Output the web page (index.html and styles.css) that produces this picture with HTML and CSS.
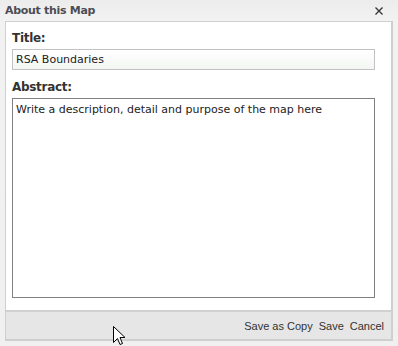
FILE: index.html
```html
<!DOCTYPE html>
<html lang="en">
<head>
    <meta charset="UTF-8">
    <title>About this Map</title>
    <link rel="stylesheet" href="styles.css">
</head>
<body>
    <!-- Dialog window -->
    <div class="dialog">
        <div class="dialog-header">
            <span class="dialog-title">About this Map</span>
            <svg class="dialog-close" width="8" height="8" viewBox="0 0 8 8">
                <path d="M0.5 0.5 L7.5 7.5 M7.5 0.5 L0.5 7.5" stroke="#333" stroke-width="1.3"/>
            </svg>
        </div>

        <div class="dialog-frame">
            <div class="dialog-body">
                <label class="field-label" for="map-title">Title:</label>
                <input type="text" id="map-title" class="field-input" value="RSA Boundaries">

                <label class="field-label" for="map-abstract">Abstract:</label>
                <textarea id="map-abstract" class="field-area">Write a description, detail and purpose of the map here</textarea>
            </div>

            <div class="dialog-footer">
                <a class="footer-link">Save as Copy</a>
                <a class="footer-link">Save</a>
                <a class="footer-link">Cancel</a>
            </div>
        </div>
    </div>

    <!-- mouse pointer -->
    <svg class="cursor" width="13" height="20" viewBox="0 0 13 20">
        <path d="M0.5 0.5 L0.5 16.5 L4.5 12.5 L7 18.5 L9.5 17.5 L7 11.5 L12 11.5 Z" fill="#fff" stroke="#000" stroke-width="1"/>
    </svg>
</body>
</html>
```

FILE: styles.css
```css
body {
    margin: 0;
    font-family: "DejaVu Sans", Verdana, sans-serif;
    background-color: #f0f0f0;
}

.dialog {
    position: relative;
    width: 398px;
    height: 346px;
    box-sizing: border-box;
    background: linear-gradient(to bottom, #ececec 0, #f2f2f2 20px, #f0f0f0 100%);
    padding: 0 5px 0 5px;
}

/* Header bar */
.dialog-header {
    height: 21px;
    display: flex;
    align-items: center;
    justify-content: space-between;
}
.dialog-title {
    font-size: 11px;
    font-weight: bold;
    color: #4d4d55;
    letter-spacing: -0.3px;
}
.dialog-close {
    margin-right: 10px;
    margin-top: 1px;
}

/* Frame around body and footer */
.dialog-frame {
    width: 388px;
    box-sizing: border-box;
    border: 1px solid #cfcfcf;
    border-right-width: 2px;
    border-bottom-width: 2px;
}

.dialog-body {
    background-color: #fff;
    height: 282px;
    padding: 6px 16px 0 6px;
    display: flex;
    flex-direction: column;
    border-bottom: 2px solid #d0d0d0;
}

.field-label {
    font-size: 12px;
    font-weight: bold;
    color: #333;
    height: 21px;
    line-height: 21px;
    letter-spacing: -0.3px;
}

.field-input {
    height: 21px;
    box-sizing: border-box;
    border: 1px solid #c2c2c2;
    background: linear-gradient(to bottom, #ffffff, #f4f6f4);
    padding: 2px 3px;
    font-family: inherit;
    font-size: 11px;
    color: #222;
    margin: 0 0 7px 0;
}

.field-area {
    height: 200px;
    box-sizing: border-box;
    border: 1px solid #808080;
    padding: 4px 3px;
    font-family: inherit;
    font-size: 11px;
    color: #222;
    resize: none;
    margin: 0;
}

.dialog-footer {
    height: 27px;
    background-color: #e6e6e6;
    display: flex;
    justify-content: flex-end;
    align-items: center;
    gap: 6px;
    padding-right: 7px;
}
.footer-link {
    font-family: "Liberation Sans", Arial, sans-serif;
    font-size: 11px;
    color: #333;
}

.cursor {
    position: absolute;
    left: 113px;
    top: 326px;
}
```
